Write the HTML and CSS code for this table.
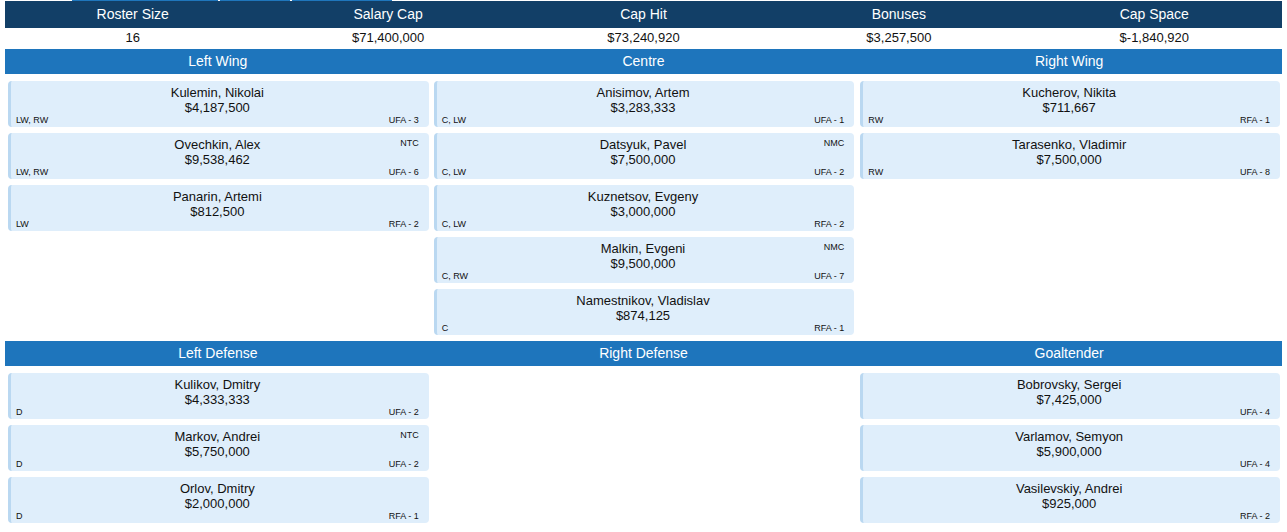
FILE: index.html
```html
<!DOCTYPE html>
<html>
<head>
<meta charset="utf-8">
<link rel="stylesheet" href="styles.css">
</head>
<body>
<div class="tabstrip">
  <span class="tab t1"></span><span class="tab t2"></span><span class="tab t3"></span>
</div>
<div class="summary">
  <div class="sum-head">
    <div>Roster Size</div><div>Salary Cap</div><div>Cap Hit</div><div>Bonuses</div><div>Cap Space</div>
  </div>
  <div class="sum-vals">
    <div>16</div><div>$71,400,000</div><div>$73,240,920</div><div>$3,257,500</div><div>$-1,840,920</div>
  </div>
</div>

<div class="section-bar"><div>Left Wing</div><div>Centre</div><div>Right Wing</div></div>
<div class="section">
  <div class="col">
    <div class="card"><div class="name">Kulemin, Nikolai</div><div class="sal">$4,187,500</div><div class="foot"><span>LW, RW</span><span>UFA - 3</span></div></div>
    <div class="card"><span class="clause">NTC</span><div class="name">Ovechkin, Alex</div><div class="sal">$9,538,462</div><div class="foot"><span>LW, RW</span><span>UFA - 6</span></div></div>
    <div class="card"><div class="name">Panarin, Artemi</div><div class="sal">$812,500</div><div class="foot"><span>LW</span><span>RFA - 2</span></div></div>
  </div>
  <div class="col">
    <div class="card"><div class="name">Anisimov, Artem</div><div class="sal">$3,283,333</div><div class="foot"><span>C, LW</span><span>UFA - 1</span></div></div>
    <div class="card"><span class="clause">NMC</span><div class="name">Datsyuk, Pavel</div><div class="sal">$7,500,000</div><div class="foot"><span>C, LW</span><span>UFA - 2</span></div></div>
    <div class="card"><div class="name">Kuznetsov, Evgeny</div><div class="sal">$3,000,000</div><div class="foot"><span>C, LW</span><span>RFA - 2</span></div></div>
    <div class="card"><span class="clause">NMC</span><div class="name">Malkin, Evgeni</div><div class="sal">$9,500,000</div><div class="foot"><span>C, RW</span><span>UFA - 7</span></div></div>
    <div class="card"><div class="name">Namestnikov, Vladislav</div><div class="sal">$874,125</div><div class="foot"><span>C</span><span>RFA - 1</span></div></div>
  </div>
  <div class="col">
    <div class="card"><div class="name">Kucherov, Nikita</div><div class="sal">$711,667</div><div class="foot"><span>RW</span><span>RFA - 1</span></div></div>
    <div class="card"><div class="name">Tarasenko, Vladimir</div><div class="sal">$7,500,000</div><div class="foot"><span>RW</span><span>UFA - 8</span></div></div>
  </div>
</div>

<div class="section-bar"><div>Left Defense</div><div>Right Defense</div><div>Goaltender</div></div>
<div class="section">
  <div class="col">
    <div class="card"><div class="name">Kulikov, Dmitry</div><div class="sal">$4,333,333</div><div class="foot"><span>D</span><span>UFA - 2</span></div></div>
    <div class="card"><span class="clause">NTC</span><div class="name">Markov, Andrei</div><div class="sal">$5,750,000</div><div class="foot"><span>D</span><span>UFA - 2</span></div></div>
    <div class="card"><div class="name">Orlov, Dmitry</div><div class="sal">$2,000,000</div><div class="foot"><span>D</span><span>RFA - 1</span></div></div>
  </div>
  <div class="col"></div>
  <div class="col">
    <div class="card"><div class="name">Bobrovsky, Sergei</div><div class="sal">$7,425,000</div><div class="foot"><span></span><span>UFA - 4</span></div></div>
    <div class="card"><div class="name">Varlamov, Semyon</div><div class="sal">$5,900,000</div><div class="foot"><span></span><span>UFA - 4</span></div></div>
    <div class="card"><div class="name">Vasilevskiy, Andrei</div><div class="sal">$925,000</div><div class="foot"><span></span><span>RFA - 2</span></div></div>
  </div>
</div>
</body>
</html>
```

FILE: styles.css
```css
html, body {
  margin: 0;
  padding: 0;
  background: #ffffff;
}
body {
  padding: 0 5px;
  font-family: Arial, "Liberation Sans", sans-serif;
  color: #111111;
}
.tabstrip {
  height: 1px;
  display: flex;
  gap: 2px;
  padding-left: 67px;
}
.tab {
  height: 1px;
  background: #1f76bc;
}
.t1 { width: 146px; }
.t2 { width: 70px; }
.t3 { width: 100px; }

.sum-head, .sum-vals {
  display: grid;
  grid-template-columns: repeat(5, 1fr);
  text-align: center;
}
.sum-head {
  background: #123f67;
  color: #ffffff;
  font-size: 14px;
  line-height: 27px;
  height: 27px;
}
.sum-vals {
  font-size: 13px;
  line-height: 20px;
  height: 20px;
  margin-bottom: 1px;
}
.section-bar {
  display: grid;
  grid-template-columns: repeat(3, 1fr);
  background: #1e75bc;
  color: #ffffff;
  font-size: 14px;
  line-height: 25px;
  height: 25px;
  text-align: center;
}
.section {
  display: grid;
  grid-template-columns: repeat(3, 1fr);
  padding: 7px 0 6px;
}
.col {
  display: flex;
  flex-direction: column;
  gap: 6px;
  padding: 0 2px 0 3px;
}
.col:last-child { padding-left: 4px; }
.card {
  position: relative;
  height: 46px;
  box-sizing: border-box;
  background: #dfeefb;
  border-left: 3px solid #bad8f1;
  border-radius: 4px;
  padding: 4px 10px 0 5px;
  text-align: center;
}
.name, .sal {
  font-size: 13px;
  line-height: 15px;
}
.foot {
  display: flex;
  justify-content: space-between;
  font-size: 9px;
  line-height: 11px;
}
.clause {
  position: absolute;
  top: 5px;
  right: 10px;
  font-size: 9px;
  line-height: 11px;
}
```
